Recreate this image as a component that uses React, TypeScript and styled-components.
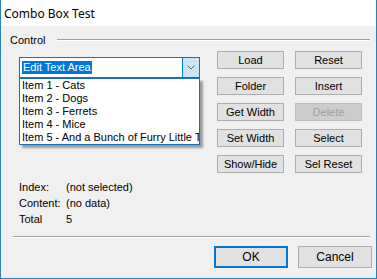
import * as React from 'react'
import styled, { createGlobalStyle } from 'styled-components'

const GlobalStyle = createGlobalStyle`
  html, body {
    margin: 0;
    padding: 0;
    background: #ffffff;
  }
`

const Window = styled.div`
  box-sizing: border-box;
  width: 377px;
  height: 279px;
  border: 1px solid #2f7fba;
  border-top: none;
  display: flex;
  flex-direction: column;
  font-family: "Liberation Sans", Arial, sans-serif;
  font-size: 11px;
  color: #000;
`

const TitleBar = styled.div`
  height: 26px;
  background: #ffffff;
  display: flex;
  align-items: center;
  padding-left: 3px;
  font-family: "Noto Sans", "Open Sans", sans-serif;
  font-size: 12px;
`

const Body = styled.div`
  flex: 1;
  background: #f0f0f0;
  display: flex;
  flex-direction: column;
`

const GroupHeader = styled.div`
  display: flex;
  align-items: center;
  height: 14px;
  margin-top: 7px;
  padding: 0 6px 0 9px;
`

const GroupLabel = styled.span`
  font-size: 11px;
`

const Rule = styled.div<{ $indent?: number }>`
  flex: 1;
  height: 0;
  border-top: 1px solid #a0a0a0;
  border-bottom: 1px solid #ffffff;
  margin-left: ${p => p.$indent ?? 0}px;
`

const MainRow = styled.div`
  display: flex;
  margin-top: 4px;
`

const LeftColumn = styled.div`
  width: 181px;
  margin-left: 18px;
  padding-top: 6px;
`

const ComboWrap = styled.div`
  position: relative;
`

const Combo = styled.div`
  box-sizing: border-box;
  height: 21px;
  border: 1px solid #0078d7;
  background: #fff;
  display: flex;
  align-items: stretch;
`

const ComboText = styled.div`
  flex: 1;
  display: flex;
  align-items: center;
  padding-left: 2px;
`

const Selected = styled.span`
  background: #0078d7;
  color: #fff;
  line-height: 13px;
  padding: 0 1px;
`

const DropButton = styled.div`
  width: 16px;
  background: #cce4f7;
  border-left: 1px solid #0078d7;
  display: flex;
  align-items: center;
  justify-content: center;
`

const DropList = styled.ul`
  position: absolute;
  top: 21px;
  left: 0;
  right: 0;
  margin: 0;
  padding: 0;
  list-style: none;
  background: #fff;
  border: 1px solid #1a6fb5;
  box-shadow: 3px 3px 2px rgba(0, 0, 0, 0.35);
  overflow: hidden;
  z-index: 2;
`

const DropItem = styled.li`
  height: 13px;
  line-height: 13px;
  padding-left: 2px;
  white-space: nowrap;
`

const ButtonGrid = styled.div`
  display: grid;
  grid-template-columns: 67px 67px;
  grid-auto-rows: 18px;
  column-gap: 11px;
  row-gap: 8px;
  margin-left: 17px;
`

const Button = styled.button<{ $default?: boolean }>`
  box-sizing: border-box;
  margin: 0;
  padding: 0;
  font-family: "Liberation Sans", Arial, sans-serif;
  font-size: 11px;
  color: #000;
  background: #e1e1e1;
  border: ${p => (p.$default ? '2px solid #0078d7' : '1px solid #adadad')};
  &:disabled {
    background: #cccccc;
    border-color: #bfbfbf;
    color: #a0a0a0;
  }
`

const Info = styled.div`
  display: grid;
  grid-template-columns: 47px auto;
  grid-auto-rows: 16px;
  align-items: center;
  margin: 6px 0 0 18px;
`

const Separator = styled.div`
  display: flex;
  margin: 9px 6px 0 12px;
`

const Footer = styled.div`
  display: flex;
  justify-content: flex-end;
  gap: 10px;
  margin-top: 8px;
  padding-right: 4px;
`

const DialogButton = styled(Button)`
  width: 74px;
  height: 22px;
  font-size: 12px;
`

const items = [
  'Item 1 - Cats',
  'Item 2 - Dogs',
  'Item 3 - Ferrets',
  'Item 4 - Mice',
  'Item 5 - And a Bunch of Furry Little Things',
]

const buttons: [string, boolean?][] = [
  ['Load'], ['Reset'],
  ['Folder'], ['Insert'],
  ['Get Width'], ['Delete', true],
  ['Set Width'], ['Select'],
  ['Show/Hide'], ['Sel Reset'],
]

export default function App() {
  return (
    <>
      <GlobalStyle />
      <Window>
        <TitleBar>Combo Box Test</TitleBar>
        <Body>
          <GroupHeader>
            <GroupLabel>Control</GroupLabel>
            <Rule $indent={12} />
          </GroupHeader>
          <MainRow>
            <LeftColumn>
              <ComboWrap>
                <Combo>
                  <ComboText>
                    <Selected>Edit Text Area</Selected>
                  </ComboText>
                  <DropButton>
                    <svg width="8" height="5" viewBox="0 0 8 5">
                      <path d="M0.5 0.5 L4 4 L7.5 0.5" fill="none" stroke="#606060" strokeWidth="1" />
                    </svg>
                  </DropButton>
                </Combo>
                <DropList>
                  {items.map(it => <DropItem key={it}>{it}</DropItem>)}
                </DropList>
              </ComboWrap>
            </LeftColumn>
            <ButtonGrid>
              {buttons.map(([label, disabled]) => (
                <Button key={label} disabled={disabled}>{label}</Button>
              ))}
            </ButtonGrid>
          </MainRow>
          <Info>
            <span>Index:</span><span>(not selected)</span>
            <span>Content:</span><span>(no data)</span>
            <span>Total</span><span>5</span>
          </Info>
          <Separator><Rule /></Separator>
          <Footer>
            <DialogButton $default>OK</DialogButton>
            <DialogButton>Cancel</DialogButton>
          </Footer>
        </Body>
      </Window>
    </>
  )
}
